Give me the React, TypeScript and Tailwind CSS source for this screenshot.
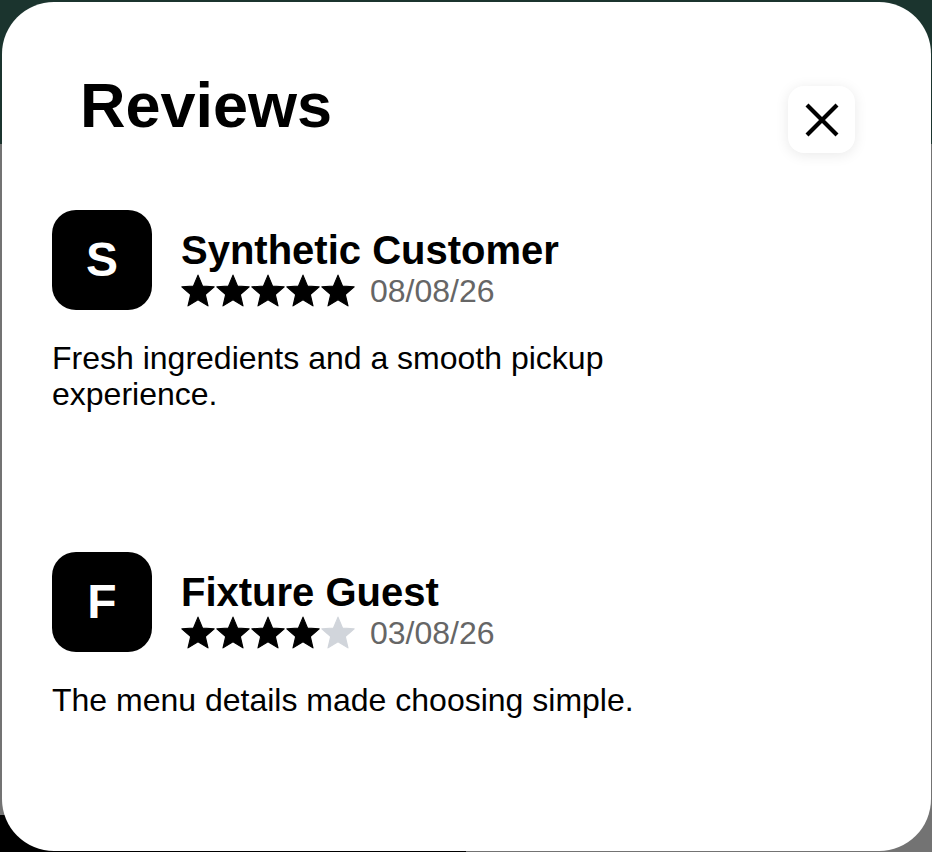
import React from 'react'

type Review = {
  initial: string
  name: string
  rating: number
  date: string
  text: string
}

const reviews: Review[] = [
  {
    initial: 'S',
    name: 'Synthetic Customer',
    rating: 5,
    date: '08/08/26',
    text: 'Fresh ingredients and a smooth pickup experience.',
  },
  {
    initial: 'F',
    name: 'Fixture Guest',
    rating: 4,
    date: '03/08/26',
    text: 'The menu details made choosing simple.',
  },
]

function Star({ filled }: { filled: boolean }) {
  return (
    <svg viewBox="0 0 24 24" className={filled ? 'h-[34px] w-[34px] text-black' : 'h-[34px] w-[34px] text-[#d1d5db]'}>
      <polygon
        points="12,0.8 15.17,8.43 23.41,9.09 17.14,14.47 19.05,22.51 12,18.2 4.95,22.51 6.86,14.47 0.59,9.09 8.83,8.43"
        fill="currentColor"
        stroke="currentColor"
        strokeWidth="0.8"
        strokeLinejoin="round"
      />
    </svg>
  )
}

function ReviewItem({ review }: { review: Review }) {
  return (
    <div>
      <div className="flex items-start gap-[29px]">
        <div className="flex h-[100px] w-[100px] shrink-0 items-center justify-center rounded-[24px] bg-black text-[48px] font-bold text-white">
          {review.initial}
        </div>
        <div className="mt-[18px] flex flex-col">
          <div className="text-[40px] font-bold leading-[44px] text-black">{review.name}</div>
          <div className="flex h-[38px] items-center">
            <div className="flex gap-[1px]">
              {[1, 2, 3, 4, 5].map((n) => (
                <Star key={n} filled={n <= review.rating} />
              ))}
            </div>
            <span className="ml-[15px] text-[32px] leading-[36px] text-[#666]">{review.date}</span>
          </div>
        </div>
      </div>
      <p className="mt-[30px] max-w-[620px] text-[32px] leading-[36px] text-black">{review.text}</p>
    </div>
  )
}

export default function App() {
  return (
    <div className="relative flex h-[852px] w-[932px] flex-col overflow-hidden bg-[#737373] font-['Liberation_Sans',Arial,sans-serif]">
      {/* page behind the sheet */}
      <div className="h-[144px] bg-[#1b342e]" />
      <div className="flex-1" />
      <div className="h-[37px] w-[466px] bg-black" />

      {/* reviews sheet */}
      <div className="absolute bottom-[1px] left-[2px] right-[1px] top-[2px] overflow-hidden rounded-[52px] bg-white">
        <div className="flex items-start justify-between pl-[78px] pr-[76px] pt-[72px]">
          <h1 className="text-[63px] font-bold leading-[62px] text-black">Reviews</h1>
          <button
            type="button"
            aria-label="Close"
            className="mt-[12px] flex h-[67px] w-[67px] items-center justify-center rounded-[16px] bg-white shadow-[0_2px_14px_rgba(0,0,0,0.09)]"
          >
            <svg viewBox="0 0 36 36" className="h-[36px] w-[36px]">
              <path d="M3 3 L33 33 M33 3 L3 33" stroke="black" strokeWidth="4.2" fill="none" />
            </svg>
          </button>
        </div>

        <div className="mt-[57px] flex flex-col gap-[140px] pl-[50px]">
          {reviews.map((r) => (
            <ReviewItem key={r.name} review={r} />
          ))}
        </div>
      </div>
    </div>
  )
}
